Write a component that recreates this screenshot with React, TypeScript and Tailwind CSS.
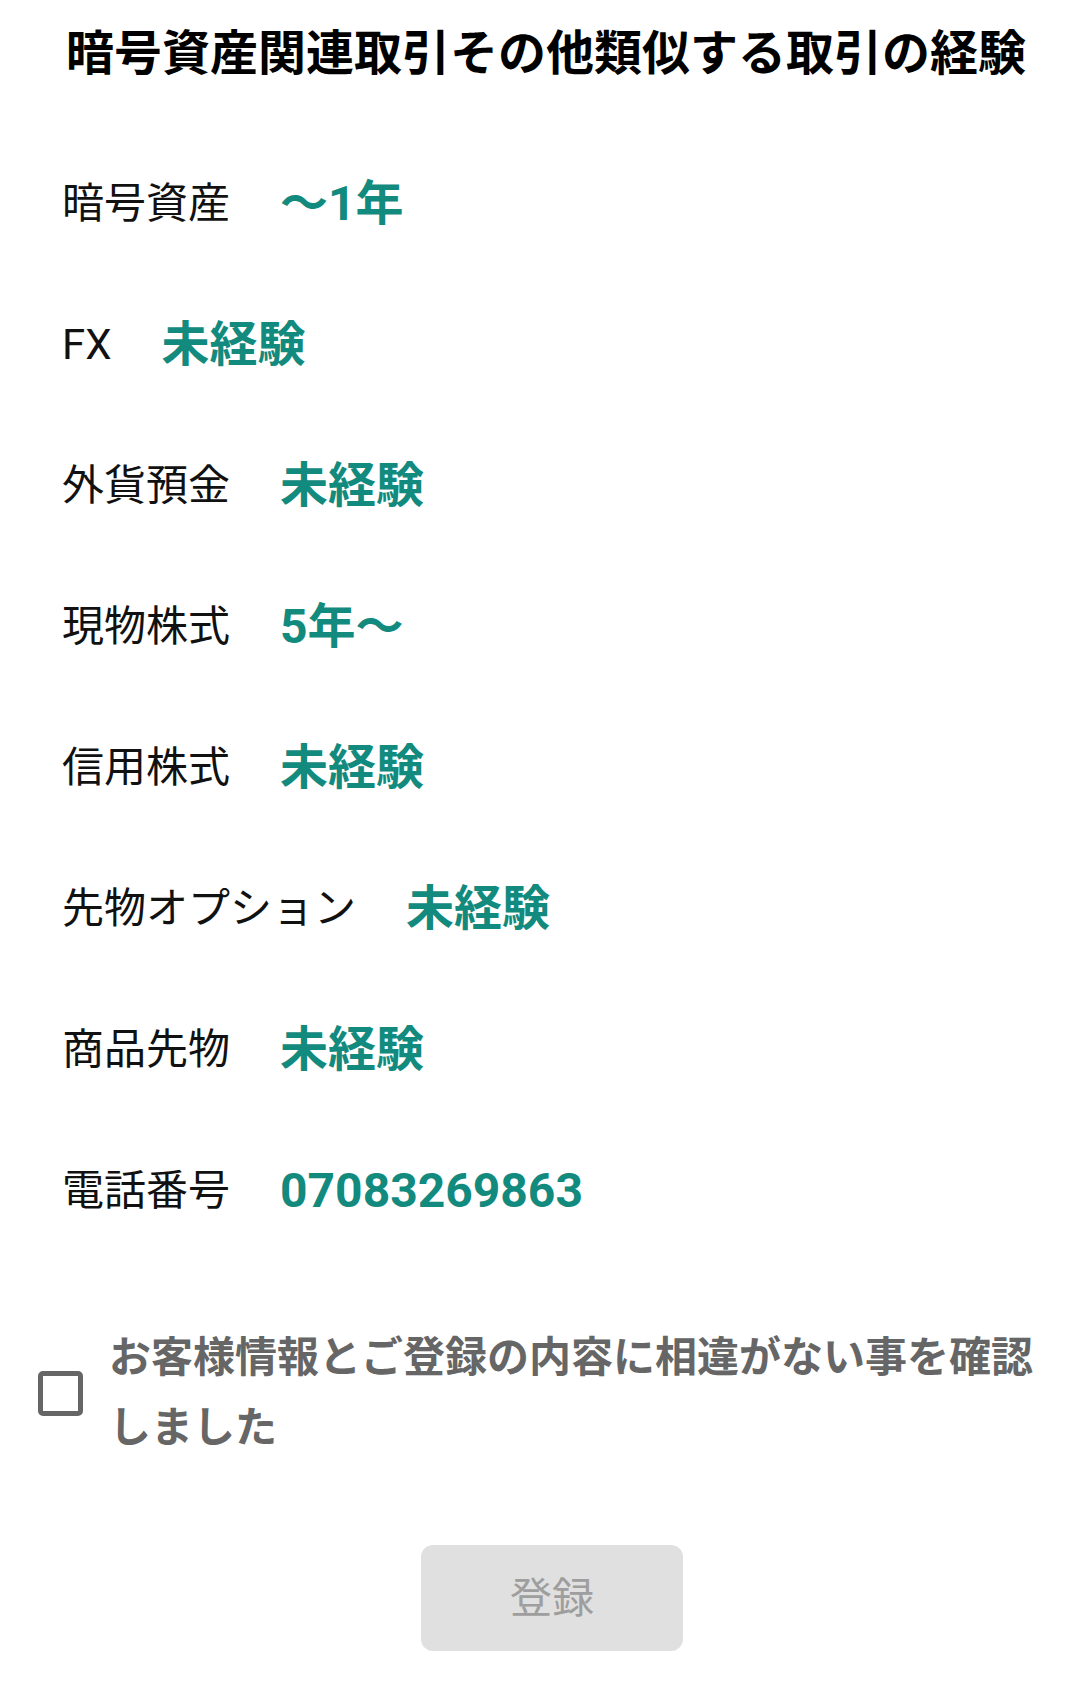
import React from "react";

const rows: [string, string][] = [
  ["暗号資産", "〜1年"],
  ["FX", "未経験"],
  ["外貨預金", "未経験"],
  ["現物株式", "5年〜"],
  ["信用株式", "未経験"],
  ["先物オプション", "未経験"],
  ["商品先物", "未経験"],
  ["電話番号", "07083269863"],
];

export default function App() {
  return (
    <div
      className="w-[1080px] h-[1705px] bg-white overflow-hidden"
      style={{ fontFamily: 'Roboto, "Noto Sans CJK JP", sans-serif' }}
    >
      <h1 className="pt-[26px] pl-[12px] text-center text-[48px] leading-[56px] font-bold text-black whitespace-nowrap">
        暗号資産関連取引その他類似する取引の経験
      </h1>
      <div className="mt-[51px] pl-[62px] flex flex-col">
        {rows.map(([label, value]) => (
          <div key={label} className="h-[141px] flex items-center">
            <span className="text-[42px] leading-none text-[#111]">{label}</span>
            <span className="ml-[50px] text-[48px] leading-none font-bold text-[#138a7e]">{value}</span>
          </div>
        ))}
      </div>
      <div className="mt-[62px] pl-[38px] pr-[40px] flex items-center">
        <div className="w-[45px] h-[45px] shrink-0 rounded-[5px] border-[5px] border-[#666]" />
        <p className="ml-[26px] text-[42px] leading-[70px] font-bold text-[#666]">
          お客様情報とご登録の内容に相違がない事を確認しました
        </p>
      </div>
      <div className="mt-[82px] pl-[421px]">
        <button className="w-[262px] h-[106px] rounded-[12px] bg-[#e0e0e0] text-[42px] text-[#9e9e9e]">
          登録
        </button>
      </div>
    </div>
  );
}
